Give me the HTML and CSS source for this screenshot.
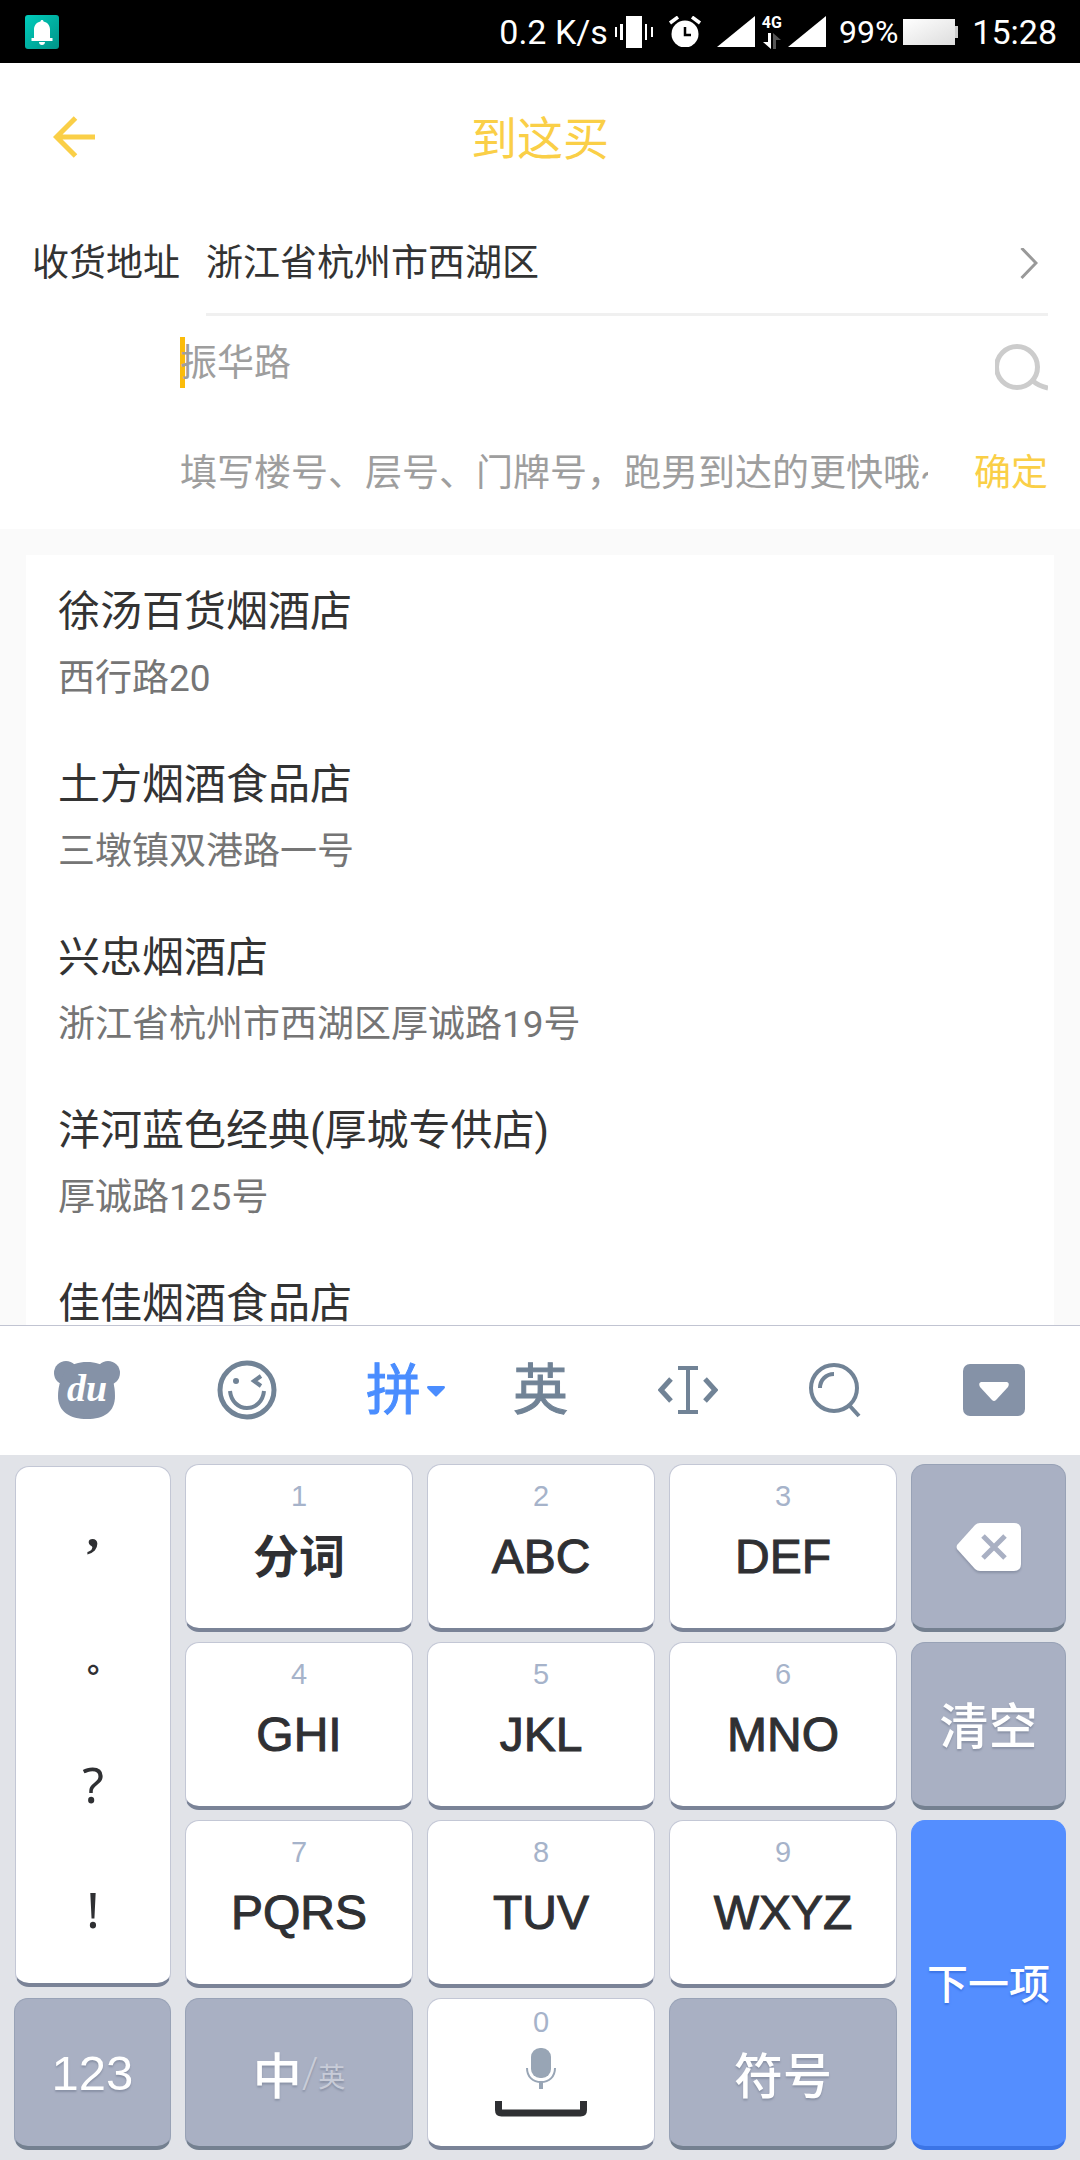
FILE: index.html
```html
<!DOCTYPE html>
<html lang="zh-CN">
<head>
<meta charset="utf-8">
<meta name="viewport" content="width=device-width, initial-scale=1">
<title>到这买</title>
<link rel="stylesheet" href="styles.css">
</head>
<body>
<div class="screen">
  <div class="status">
    <svg class="status-bell" width="34" height="34" viewBox="0 0 34 34" aria-hidden="true">
      <defs><linearGradient id="teal" x1="0" y1="0" x2="1" y2="1"><stop offset="0" stop-color="#00cdbc"/><stop offset="1" stop-color="#009488"/></linearGradient></defs>
      <rect width="34" height="34" rx="3" fill="url(#teal)"/>
      <path fill="#fff" d="M17 5c1 0 1.500.7 1.500 1.600 4 .9 6.500 4 6.500 8V23h2.500v3h-21v-3H9v-8.400c0-4 2.500-7.100 6.500-8C15.500 5.700 16 5 17 5zM14 27h6c0 1.800-1.300 3-3 3s-3-1.200-3-3z"/>
    </svg>
    <span class="status-text status-net">0.2 K/s</span>
    <svg class="status-vibrate" width="38" height="32" viewBox="0 0 38 32" aria-hidden="true" fill="#fff"><path d="M11 0h16v32H11zM0 11h2v10H0zM5 8h3v16H5zM30 8h2v16h-2zM36 11h2v10h-2z"/></svg>
    <svg class="status-alarm" width="34" height="31" viewBox="0 0 34 31" aria-hidden="true"><circle cx="17" cy="18" r="13.500" fill="#fff"/><path d="M2 7l8-6M32 7l-8-6" stroke="#fff" stroke-width="3.500"/><path d="M17 11v8h6" fill="none" stroke="#000" stroke-width="2.500"/></svg>
    <svg class="status-signal" width="38" height="31" viewBox="0 0 38 31" aria-hidden="true"><path fill="#fff" d="M38 0v31H0z"/></svg>
    <span class="status-data"><span>4G</span>
      <svg width="20" height="16" viewBox="0 0 20 16" aria-hidden="true"><path fill="#fff" d="M6 0h3v16L1 9h5z"/><path fill="#555" d="M11 16h3V7h5l-8-7z"/></svg>
    </span>
    <svg class="status-signal-second" width="38" height="31" viewBox="0 0 38 31" aria-hidden="true"><path fill="#fff" d="M38 0v31H0z"/></svg>
    <span class="status-percent">99%</span>
    <svg class="status-battery" width="55" height="26" viewBox="0 0 55 26" aria-hidden="true">
      <defs><linearGradient id="charge" x1="0" y1="0" x2="1" y2="1"><stop offset="0" stop-color="#fff"/><stop offset="1" stop-color="#ddd"/></linearGradient></defs>
      <path fill="url(#charge)" d="M0 0h52v26H0z"/><path fill="#ccc" d="M52 7h3v12h-3z"/>
    </svg>
    <span class="status-text status-time">15:28</span>
  </div>

  <header class="header">
    <button class="back" type="button" aria-label="返回">
      <svg width="42" height="42" viewBox="0 0 42 42" fill="none" stroke="#facf47" stroke-width="5"><path d="M42 21H4M22.500 2L3.500 21l19 19"/></svg>
    </button>
    <h1 class="title">到这买</h1>
  </header>

  <form class="form">
    <button class="region" type="button">
      <span class="region-label">收货地址</span>
      <span class="region-value">浙江省杭州市西湖区
        <svg width="18" height="32" viewBox="0 0 18 32" fill="none" stroke="#999" stroke-width="3" aria-hidden="true"><path d="M1.500 0L16 15 1.500 30"/></svg>
      </span>
    </button>
    <div class="row row-street">
      <div class="field">
        <span class="caret"></span>
        <input class="input" type="text" placeholder="振华路" aria-label="街道">
      </div>
      <button class="search" type="button" aria-label="搜索">
        <svg width="53" height="50" viewBox="0 0 53 50" fill="none" stroke="#ccc" stroke-width="5"><circle cx="22" cy="24" r="20.500"/><path d="M37 37q6 6 16 8"/></svg>
      </button>
    </div>
    <div class="row row-detail">
      <input class="input" type="text" placeholder="填写楼号、层号、门牌号，跑男到达的更快哦~" aria-label="门牌号">
      <button class="confirm" type="button">确定</button>
    </div>
  </form>

  <main class="results">
    <ul class="list">
      <li class="item"><span class="item-name">徐汤百货烟酒店</span><span class="item-address">西行路20</span></li>
      <li class="item"><span class="item-name">土方烟酒食品店</span><span class="item-address">三墩镇双港路一号</span></li>
      <li class="item"><span class="item-name">兴忠烟酒店</span><span class="item-address">浙江省杭州市西湖区厚诚路19号</span></li>
      <li class="item"><span class="item-name">洋河蓝色经典(厚城专供店)</span><span class="item-address">厚诚路125号</span></li>
      <li class="item"><span class="item-name">佳佳烟酒食品店</span></li>
    </ul>
  </main>

  <section class="keyboard" aria-label="键盘">
    <div class="tools">
      <button class="tool" type="button" aria-label="百度输入法">
        <svg width="66" height="60" viewBox="0 0 66 60"><g fill="#8592a7"><circle cx="12" cy="13" r="12"/><circle cx="54" cy="13" r="12"/><path d="M33 2c9 0 15 2 20 7 5 6 8 16 8 27 0 16-11 23-28 23S4 52 4 36C4 25 8 15 13 9c5-5 11-7 20-7z"/></g><text class="du" x="33" y="41" text-anchor="middle">du</text></svg>
      </button>
      <button class="tool" type="button" aria-label="表情">
        <svg width="60" height="60" viewBox="0 0 60 60" fill="none" stroke="#718396" stroke-width="5"><circle cx="30" cy="30" r="27"/><path d="M13 31c1 10 8 17 17 17s16-7 17-17" stroke-width="4"/><path d="M44 16l-7 5 7 5" stroke-width="4"/><circle cx="19" cy="21" r="3" fill="#718396" stroke="none"/></svg>
      </button>
      <button class="tool tool-text tool-active" type="button">拼<svg class="tool-drop" width="18" height="11" viewBox="0 0 18 11" aria-hidden="true"><path fill="#4a8dff" d="M1 0h16q2 1 0 3l-7 7q-1 1-2 0L1 3q-2-2 0-3z"/></svg></button>
      <button class="tool tool-text" type="button">英</button>
      <button class="tool" type="button" aria-label="移动光标">
        <svg width="60" height="50" viewBox="0 0 60 50" fill="none" stroke="#718396" stroke-width="4"><path d="M20 3h20M20 47h20M30 3v44"/><path d="M13 14L3 25l10 11M47 14l10 11-10 11" stroke-width="5"/></svg>
      </button>
      <button class="tool" type="button" aria-label="搜索">
        <svg width="54" height="56" viewBox="0 0 54 56" fill="none" stroke="#718396" stroke-width="4"><circle cx="26" cy="26" r="23"/><path d="M12 26c0-8 6-14 14-14M41 43l10 11"/></svg>
      </button>
      <button class="tool" type="button" aria-label="收起键盘">
        <svg width="62" height="52" viewBox="0 0 62 52"><rect width="62" height="52" rx="7" fill="#8592a7"/><path fill="#fff" d="M18 18h26q3 1 1 5L33 36q-2 2-4 0L17 23q-2-4 1-5z"/></svg>
      </button>
    </div>

    <div class="keys">
      <div class="key punctuation">
        <button class="mark mark-comma" type="button">,</button>
        <button class="mark mark-stop" type="button">。</button>
        <button class="mark" type="button">?</button>
        <button class="mark" type="button">!</button>
      </div>
      <button class="key" type="button"><span class="digit">1</span><span class="word">分词</span></button>
      <button class="key" type="button"><span class="digit">2</span><span class="letters">ABC</span></button>
      <button class="key" type="button"><span class="digit">3</span><span class="letters">DEF</span></button>
      <button class="key key-dark" type="button" aria-label="删除">
        <svg class="erase" width="66" height="48" viewBox="0 0 66 48"><path fill="#fff" d="M24 0h34q7 0 7 7v34q0 7-7 7H24q-3 0-5-2L1 26q-1-2 0-4L19 2q2-2 5-2z"/><path d="M27 13l22 22M49 13L27 35" stroke="#a9b0c3" stroke-width="5"/></svg>
      </button>
      <button class="key" type="button"><span class="digit">4</span><span class="letters">GHI</span></button>
      <button class="key" type="button"><span class="digit">5</span><span class="letters">JKL</span></button>
      <button class="key" type="button"><span class="digit">6</span><span class="letters">MNO</span></button>
      <button class="key key-dark key-clear" type="button">清空</button>
      <button class="key" type="button"><span class="digit">7</span><span class="letters">PQRS</span></button>
      <button class="key" type="button"><span class="digit">8</span><span class="letters">TUV</span></button>
      <button class="key" type="button"><span class="digit">9</span><span class="letters">WXYZ</span></button>
      <button class="key key-next" type="button">下一项</button>
      <button class="key key-dark key-numbers" type="button">123</button>
      <button class="key key-dark key-language" type="button">中<span class="language-off"><span class="slash">/</span>英</span></button>
      <button class="key key-space" type="button" aria-label="空格"><span class="digit">0</span>
        <svg width="92" height="69" viewBox="0 0 92 69" fill="none"><rect x="36" y="0" width="20" height="30" rx="9" fill="#98a5b5"/><path d="M32 20c0 9 6 14 14 14s14-5 14-14" stroke="#98a5b5" stroke-width="2"/><path d="M46 34v7" stroke="#98a5b5" stroke-width="4"/><path d="M3.500 53v9q0 3 3 3h79q3 0 3-3v-9" stroke="#2f3033" stroke-width="7"/></svg>
      </button>
      <button class="key key-dark" type="button">符号</button>
    </div>
  </section>
</div>
</body>
</html>
```
FILE: styles.css
```css
* {
  box-sizing: border-box;
}

body {
  margin: 0;
  font-family: Roboto, "Noto Sans CJK SC", sans-serif;
  color: #333;
  background: #fafafa;
}

button,
input {
  margin: 0;
  padding: 0;
  border: 0;
  background: none;
  color: inherit;
  font: inherit;
}

svg {
  display: block;
  flex: none;
}

.screen {
  display: flex;
  flex-direction: column;
  height: 100vh;
}

/* Status bar */
.status {
  display: flex;
  flex: none;
  align-items: center;
  height: 63px;
  padding: 0 23px 0 25px;
  background: #000;
  color: #fff;
  white-space: nowrap;
}

.status-text {
  font-size: 34px;
  line-height: 40px;
}

.status-net {
  margin-left: auto;
}

.status-vibrate {
  margin-left: 7px;
}

.status-alarm,
.status-signal {
  margin-left: 15px;
}

.status-data {
  display: flex;
  flex-direction: column;
  align-items: center;
  gap: 2px;
  margin-left: 7px;
  font-size: 16px;
  font-weight: 700;
  line-height: 16px;
}

.status-signal-second {
  margin-left: 6px;
}

.status-percent {
  margin-left: 13px;
  font-size: 32px;
  line-height: 40px;
}

.status-battery {
  margin-left: 5px;
}

.status-time {
  margin-left: 14px;
}

/* Header */
.header {
  display: grid;
  flex: none;
  grid-template-columns: 1fr auto 1fr;
  align-items: center;
  height: 148px;
  padding: 0 53px;
  background: #fff;
}

.back {
  justify-self: start;
}

.title {
  margin: 0;
  padding-top: 4px;
  font-size: 46px;
  font-weight: 400;
  line-height: 60px;
  color: #facf47;
}

/* Address form */
.form {
  flex: none;
  padding: 0 32px;
  background: #fff;
  font-size: 37px;
  line-height: 50px;
}

.region {
  display: flex;
  width: 100%;
  text-align: left;
}

.region-label {
  width: 174px;
  padding: 28px 0 24px;
}

.region-value {
  display: flex;
  flex: 1;
  align-items: center;
  justify-content: space-between;
  padding: 28px 10px 24px 0;
  border-bottom: 3px solid #f0f0f0;
}

.row {
  display: flex;
  align-items: center;
  padding-left: 148px;
}

.row-street {
  height: 100px;
  padding-bottom: 4px;
}

.row-detail {
  height: 113px;
  padding-top: 2px;
  gap: 46px;
}

.field {
  position: relative;
  flex: 1;
}

.caret {
  position: absolute;
  top: -2px;
  left: 0;
  width: 5px;
  height: 51px;
  background: #fbbc0b;
}

.input {
  position: relative;
  display: block;
  flex: 1;
  width: 100%;
  min-width: 0;
  height: 50px;
}

.input::placeholder {
  color: #9e9e9e;
  opacity: 1;
}

.search {
  padding-top: 8px;
}

.confirm {
  flex: none;
  color: #facf47;
}

/* Search results */
.results {
  flex: 1;
  min-height: 0;
  padding: 26px 26px 0;
  overflow: hidden;
}

.list {
  margin: 0;
  padding: 0;
  background: #fff;
  list-style: none;
}

.item {
  display: flex;
  flex-direction: column;
  gap: 12px;
  padding: 27px 32px 24px;
}

.item-name {
  font-size: 42px;
  line-height: 60px;
}

.item-address {
  font-size: 37px;
  line-height: 50px;
  color: #757575;
}

/* Keyboard */
.keyboard {
  flex: none;
  border-top: 1px solid #c1c4d2;
  background: #e1e3e8;
}

.tools {
  display: grid;
  grid-template-columns: 173fr repeat(5, 147fr) 172fr;
  height: 129px;
  padding-bottom: 2px;
  background: #fff;
}

.tool {
  display: flex;
  align-items: center;
  justify-content: center;
}

.tool-text {
  position: relative;
  color: #718396;
  font-size: 55px;
  line-height: 60px;
  -webkit-text-stroke: 1px currentColor;
}

.tool-active {
  color: #4a8dff;
}

.tool-drop {
  position: absolute;
  top: 60px;
  right: 22px;
}

.du {
  fill: #fff;
  font: italic 700 38px "Liberation Serif", serif;
}

.keys {
  display: grid;
  grid-template-columns: 157fr 228fr 228fr 228fr 155fr;
  grid-template-rows: repeat(3, 168px) 152px;
  gap: 10px 14px;
  padding: 9px 14px 10px;
}

.key {
  display: flex;
  flex-direction: column;
  align-items: center;
  border: 1px solid #c3c7d5;
  border-bottom: 4px solid #7a8397;
  border-radius: 14px;
  background: #fff;
  color: #2f3033;
}

.key-dark,
.key-next {
  flex-direction: row;
  justify-content: center;
  border-color: #98a2b6;
  border-bottom-color: #748090;
  background: #a9b0c3;
  color: #fff;
  font-size: 49px;
  font-weight: 500;
  text-shadow: 0 2px 2px #8a92a6;
}

.key-clear,
.key-next {
  padding-bottom: 5px;
}

.key-next {
  grid-row: 3 / 5;
  grid-column: 5;
  border-color: #548eff;
  border-bottom-color: #3b74e6;
  background: #548eff;
  font-size: 41px;
  text-shadow: 0 2px 2px #3b74e6;
}

.key-numbers {
  font-family: "Liberation Sans", sans-serif;
  font-weight: 400;
}

.punctuation {
  grid-row: 1 / 4;
  margin: 2px 0 1px 1px;
  padding-bottom: 12px;
}

.mark {
  flex: 1;
  width: 100%;
  font-family: "Noto Sans", "Noto Sans CJK SC", sans-serif;
  font-size: 50px;
  line-height: 60px;
}

.mark-comma {
  font-family: "Liberation Serif", serif;
  font-weight: 700;
}

.mark-stop {
  padding: 6px 0 0 20px;
  font-size: 32px;
  font-weight: 700;
}

.digit {
  margin-top: 15px;
  font-family: "Liberation Sans", sans-serif;
  font-size: 29px;
  line-height: 32px;
  color: #a6b3ca;
}

.letters,
.word {
  margin-top: 15px;
  font-size: 48px;
  line-height: 60px;
}

.letters {
  font-family: "Liberation Sans", sans-serif;
  -webkit-text-stroke: 1px #2f3033;
}

.word {
  font-size: 46px;
  font-weight: 700;
}

.language-off {
  color: #c8ccd8;
  font-size: 27px;
  font-weight: 400;
}

.slash {
  font-size: 42px;
  font-weight: 300;
}

.key-space .digit {
  margin-top: 7px;
}

.key-space svg {
  margin-top: 10px;
}

.erase {
  filter: drop-shadow(0 2px 1px #8a92a6);
}
```
